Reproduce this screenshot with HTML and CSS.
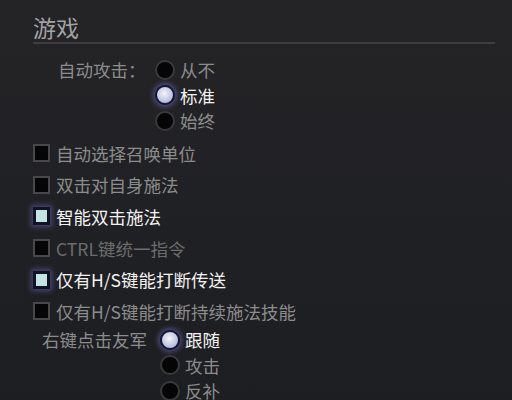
FILE: index.html
```html
<html>

<head>
    <title>游戏设置</title>
    <link rel="stylesheet" href="styles.css">
</head>

<body>

    <div class="panel">
        <h1 class="title">游戏</h1>

        <div class="group attack">
            <span class="group-label">自动攻击：</span>
            <div class="options">
                <div class="option"><span class="radio"></span>从不</div>
                <div class="option on"><span class="radio"></span>标准</div>
                <div class="option"><span class="radio"></span>始终</div>
            </div>
        </div>

        <ul class="checks">
            <li><span class="box"></span>自动选择召唤单位</li>
            <li><span class="box"></span>双击对自身施法</li>
            <li class="on"><span class="box"></span>智能双击施法</li>
            <li class="dim"><span class="box"></span>CTRL键统一指令</li>
            <li class="on"><span class="box"></span>仅有H/S键能打断传送</li>
            <li><span class="box"></span>仅有H/S键能打断持续施法技能</li>
        </ul>

        <div class="group ally">
            <span class="group-label">右键点击友军</span>
            <div class="options">
                <div class="option on"><span class="radio"></span>跟随</div>
                <div class="option"><span class="radio"></span>攻击</div>
                <div class="option"><span class="radio"></span>反补</div>
            </div>
        </div>
    </div>

</body>

</html>
```

FILE: styles.css
```css
* {
    margin: 0;
    padding: 0;
    box-sizing: border-box;
}

body {
    width: 512px;
    height: 400px;
    overflow: hidden;
    background: linear-gradient(#242427, #1d1e22);
    font: 17.5px "Noto Sans CJK SC", "Noto Sans", sans-serif;
    color: #8c8c8c;
}

.panel {
    padding: 12px 0 0 33px;
}

.title {
    width: 462px;
    font-size: 23px;
    font-weight: normal;
    line-height: 30px;
    color: #a2a2a2;
    border-bottom: 2px solid #3e3e41;
    padding-bottom: 0;
}

.group {
    display: flex;
    align-items: flex-start;
}

.group-label {
    flex-shrink: 0;
    white-space: nowrap;
    line-height: 25px;
}

.attack {
    margin: 13px 0 0 25px;
}

.attack .group-label {
    width: 97px;
}

.ally {
    margin: 0 0 0 9px;
}

.ally .group-label {
    width: 118px;
}

.option {
    display: flex;
    align-items: center;
    height: 25.5px;
}

.option.on,
.checks li.on {
    color: #f2f2f2;
}

.radio {
    width: 20px;
    height: 20px;
    margin-right: 5px;
    border-radius: 50%;
    background: #050505;
    border: 2px solid #3a3a3c;
}

.option.on .radio {
    background: radial-gradient(circle at 45% 40%, #f4f4fb, #b7bcdb 70%);
    border: 2px solid #14173a;
    box-shadow: 0 0 5px 2px rgba(120, 110, 190, 0.55);
}

.checks {
    list-style: none;
    margin-top: 4px;
}

.checks li {
    display: flex;
    align-items: center;
    height: 31.6px;
}

.checks li.dim {
    color: #6c6c6c;
}

.box {
    width: 17px;
    height: 18px;
    margin-right: 6px;
    background: #050505;
    border: 2px solid #48484a;
}

.checks li.on .box {
    background: #c5e2e4;
    border: 3px solid #101226;
    box-shadow: 0 0 5px 2px rgba(110, 100, 180, 0.55);
}
```
